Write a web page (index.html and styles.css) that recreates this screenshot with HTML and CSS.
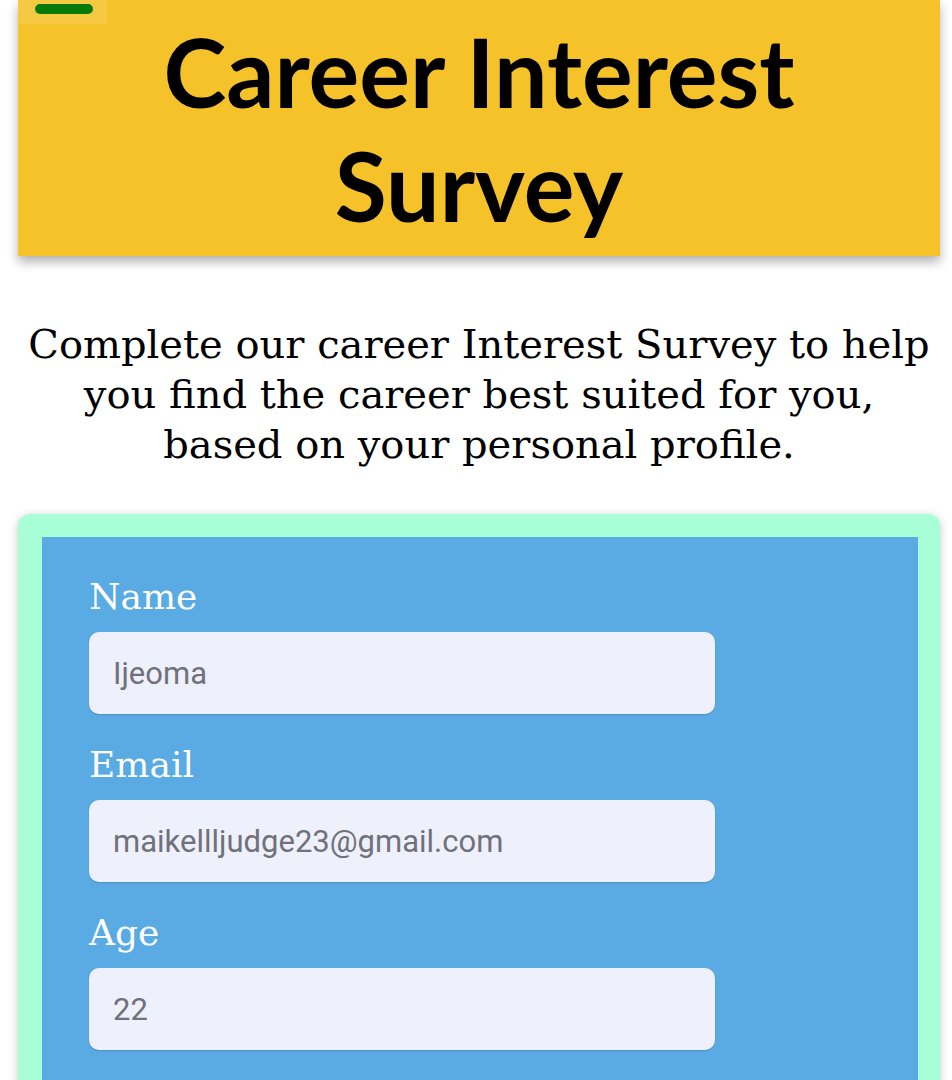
FILE: index.html
```html
<!DOCTYPE html>
<html lang="en">
<head>
<meta charset="utf-8">
<title>Career Interest Survey</title>
<link rel="stylesheet" href="styles.css">
</head>
<body>
<header class="hero">
  <span class="hero-tab"><span class="hero-bar"></span></span>
  <h1 class="hero-title">Career Interest Survey</h1>
</header>
<p class="intro">Complete our career Interest Survey to help you find the career best suited for you, based on your personal profile.</p>
<section class="card">
  <form class="form">
    <label class="field">
      <span class="field-label">Name</span>
      <input class="field-input" type="text" value="Ijeoma">
    </label>
    <label class="field">
      <span class="field-label">Email</span>
      <input class="field-input" type="email" value="maikellljudge23@gmail.com">
    </label>
    <label class="field">
      <span class="field-label">Age</span>
      <input class="field-input" type="text" value="22">
    </label>
  </form>
</section>
</body>
</html>
```

FILE: styles.css
```css
* { box-sizing: border-box; }
html, body { background: #ffffff; }
body {
  margin: 0;
  padding: 0 12px 0 18px;
  font-family: "DejaVu Serif", serif;
  color: #000;
}
.hero {
  position: relative;
  background: #f5c229;
  padding: 14px 0 14px;
  box-shadow: 0 6px 10px rgba(0, 0, 0, 0.3);
  text-align: center;
}
.hero-tab {
  position: absolute;
  left: 0;
  top: 0;
  width: 89px;
  height: 24px;
  background: rgba(255, 255, 255, 0.12);
}
.hero-bar {
  position: absolute;
  left: 17px;
  top: 4px;
  width: 58px;
  height: 10px;
  border-radius: 5px;
  background: #067a06;
}
.hero-title {
  margin: 0;
  font-family: "Lato", sans-serif;
  font-weight: 700;
  font-size: 95px;
  line-height: 114px;
}
.intro {
  max-width: 910px;
  margin: 0 auto;
  padding: 63px 0 0;
  text-align: center;
  font-family: "DejaVu Serif", serif;
  font-size: 40px;
  line-height: 50px;
}
.card {
  margin-top: 45px;
  background: #a8ffd7;
  border-radius: 12px;
  padding: 23px 22px 0 24px;
  box-shadow: 0 2px 10px rgba(0, 0, 0, 0.22);
}
.form {
  background: #5aaae3;
  padding: 36px 47px 80px;
  display: flex;
  flex-direction: column;
  gap: 27px;
}
.field {
  display: flex;
  flex-direction: column;
  gap: 11px;
}
.field-label {
  color: #ffffff;
  font-family: "DejaVu Serif", serif;
  font-size: 36px;
  line-height: 48px;
}
.field-input {
  width: 626px;
  height: 82px;
  border: 0;
  border-radius: 10px;
  background: #eef0fc;
  padding: 0 24px;
  font-family: "Roboto", sans-serif;
  font-size: 31px;
  color: #70717a;
  box-shadow: 0 1px 2px rgba(0, 0, 0, 0.15);
}
```
